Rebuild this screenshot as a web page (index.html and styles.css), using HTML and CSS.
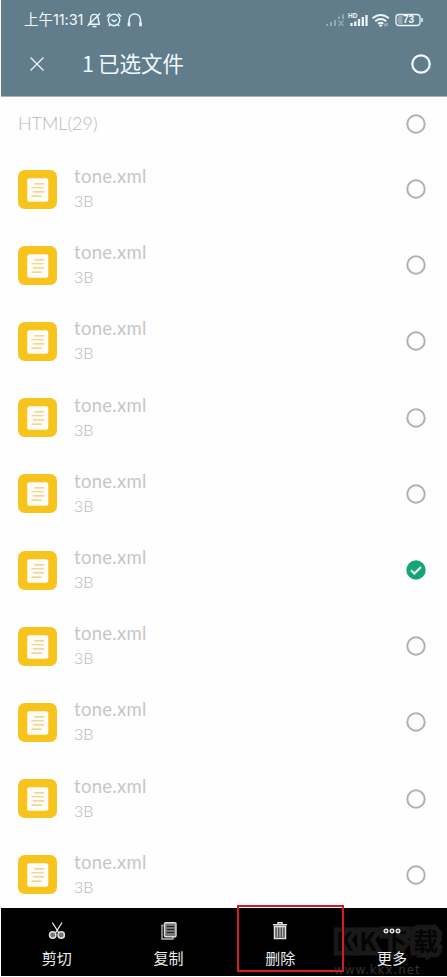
FILE: index.html
```html
<!DOCTYPE html>
<html lang="zh-CN">
<head>
<meta charset="utf-8">
<title>文件</title>
<link rel="stylesheet" href="styles.css">
</head>
<body>
<svg class="defs" aria-hidden="true">
  <symbol id="doc" viewBox="0 0 38 38">
    <rect width="38" height="38" rx="6.5" fill="#f7c31d"/>
    <rect x="9" y="8" width="20.5" height="23" rx="2" fill="#fffdf5"/>
    <path d="M16 13.500h9.500M13 17.300h12M14.500 21.300h11M13 25.500h10" stroke="#edc779" stroke-width="1.200"/>
  </symbol>
  <symbol id="ring" viewBox="0 0 20 20">
    <circle cx="10" cy="10" r="8.700" fill="none" stroke="#b0b0b0" stroke-width="2"/>
  </symbol>
  <symbol id="checked" viewBox="0 0 20 20">
    <circle cx="10" cy="10" r="9.700" fill="#16a577"/>
    <path d="M5 10.200l3.400 3.300L15 7" fill="none" stroke="#e8fff8" stroke-width="2.200"/>
  </symbol>
</svg>
<div class="phone">
  <header class="header">
    <div class="status">
      <span class="time">上午<span class="digits">11:31</span></span>
      <svg class="status-left" viewBox="0 0 58 18" fill="none" stroke="#e8f5fa" stroke-width="1.400">
        <path d="M2 13.200h12M3.700 12.500c1-1.500 1-3 1-5 0-5.500 7.500-5.500 7.500 0 0 2 .2 3.500 1.300 5M6.500 15.500h4M1.500 15L14 2.500"/>
        <circle cx="28" cy="9" r="5.700"/><path d="M25.500 8.500l2.500 2 2.700-2M20.800 5.500l3.200-3M32 2.500l3.200 3M24 13.500l-1.200 1.700M32 13.500l1.200 1.700"/>
        <path d="M43 13.500V9.500c0-8.700 11.500-8.700 11.500 0v4" stroke-width="1.600"/><path d="M43 11.500v3.700M54.500 11.500v3.700" stroke-width="2.600"/>
      </svg>
      <svg class="status-right" viewBox="0 0 100 18">
        <g stroke="#93aab5" stroke-width="2"><path d="M2 15v-2M6 15v-4M10 15V9M14 8V5.500M18 8V3.500"/><path d="M13.500 9.500l5 5.500M18.500 9.500l-5 5.500" stroke-width="1.300"/></g>
        <text x="23" y="7.300" class="hd">HD</text>
        <path d="M26.500 15v-3M30.300 15v-4.500M34 15V8M37.800 15V6M41.500 15V4" stroke="#eef8fb" stroke-width="2.300"/>
        <g fill="none" stroke="#eef8fb" stroke-width="1.900"><path d="M47.500 7.300q8.200-6.500 16.400 0M50.200 10.200q5.500-4.300 11 0M53 12.700q2.700-2 5.400 0"/></g>
        <path d="M54.200 14h3l-1.500 2zM60 12.500v3M62 12v3" fill="#eef8fb" stroke="#eef8fb" stroke-width=".7"/>
        <rect x="71" y="3.500" width="24" height="11" rx="3" fill="none" stroke="#e8f5fa" stroke-width="1.300"/>
        <path d="M74.500 5h3v8h-3q-2 0-2-2V7q0-2 2-2z" fill="#91a6af"/><path d="M97 7v4" stroke="#e8f5fa" stroke-width="1.500"/>
        <text x="78" y="12.300" class="battery">73</text>
      </svg>
    </div>
    <div class="title-bar">
      <svg class="close" viewBox="0 0 16 16"><path d="M1.500 1.500l13 13M14.500 1.500l-13 13" stroke="#f0fafd" stroke-width="1.200"/></svg>
      <h1 class="title"><span class="count">1</span>已选文件</h1>
      <svg class="select-all" viewBox="0 0 20 20"><circle cx="10" cy="10" r="8.700" fill="none" stroke="#f2fbfd" stroke-width="2.200"/></svg>
    </div>
  </header>
  <main class="list">
    <div class="group"><span class="label">HTML(29)</span><svg class="mark"><use href="#ring"/></svg></div>
    <div class="row"><svg class="file"><use href="#doc"/></svg><div class="info"><div class="name">tone.xml</div><div class="size">3B</div></div><svg class="mark"><use href="#ring"/></svg></div>
    <div class="row"><svg class="file"><use href="#doc"/></svg><div class="info"><div class="name">tone.xml</div><div class="size">3B</div></div><svg class="mark"><use href="#ring"/></svg></div>
    <div class="row"><svg class="file"><use href="#doc"/></svg><div class="info"><div class="name">tone.xml</div><div class="size">3B</div></div><svg class="mark"><use href="#ring"/></svg></div>
    <div class="row"><svg class="file"><use href="#doc"/></svg><div class="info"><div class="name">tone.xml</div><div class="size">3B</div></div><svg class="mark"><use href="#ring"/></svg></div>
    <div class="row"><svg class="file"><use href="#doc"/></svg><div class="info"><div class="name">tone.xml</div><div class="size">3B</div></div><svg class="mark"><use href="#ring"/></svg></div>
    <div class="row"><svg class="file"><use href="#doc"/></svg><div class="info"><div class="name">tone.xml</div><div class="size">3B</div></div><svg class="mark"><use href="#checked"/></svg></div>
    <div class="row"><svg class="file"><use href="#doc"/></svg><div class="info"><div class="name">tone.xml</div><div class="size">3B</div></div><svg class="mark"><use href="#ring"/></svg></div>
    <div class="row"><svg class="file"><use href="#doc"/></svg><div class="info"><div class="name">tone.xml</div><div class="size">3B</div></div><svg class="mark"><use href="#ring"/></svg></div>
    <div class="row"><svg class="file"><use href="#doc"/></svg><div class="info"><div class="name">tone.xml</div><div class="size">3B</div></div><svg class="mark"><use href="#ring"/></svg></div>
    <div class="row"><svg class="file"><use href="#doc"/></svg><div class="info"><div class="name">tone.xml</div><div class="size">3B</div></div><svg class="mark"><use href="#ring"/></svg></div>
  </main>
  <nav class="actions">
    <div class="watermark"><span class="brand">KK下载</span><span class="site">www.kkx.net</span></div>
    <div class="action">
      <svg viewBox="0 0 20 20"><path d="M5.300 1.500L12 12M15 1.500L8.500 12" stroke="#eee" stroke-width="1.300"/><g fill="#777" stroke="#ddd" stroke-width="1.500"><circle cx="5.700" cy="14" r="3.200"/><circle cx="14.200" cy="14" r="3.200"/></g></svg>
      <span>剪切</span>
    </div>
    <div class="action">
      <svg viewBox="0 0 20 20"><path d="M4.500 4.500H3V18h11v-2" fill="none" stroke="#bbb" stroke-width="1.300"/><rect x="5.500" y="1.700" width="11.500" height="14" rx="1" fill="#777" stroke="#ddd" stroke-width="1.400"/><path d="M8 5.500h7M8 8.500h7M8 11.500h7" stroke="#222" stroke-width="1.200"/></svg>
      <span>复制</span>
    </div>
    <div class="action">
      <svg viewBox="0 0 20 20" fill="none" stroke="#e2e2e2"><path d="M3 3.700h14M8 3V1.700h4V3" stroke-width="1.500"/><path d="M4.500 5.500h11V17.500h-11z" fill="#555" stroke-width="1.500"/><path d="M7.300 6v10M10 6v10M12.700 6v10" stroke="#ccc"/></svg>
      <span>删除</span>
      <i class="highlight"></i>
    </div>
    <div class="action">
      <svg viewBox="0 0 20 20" fill="#555" stroke="#eee" stroke-width="1.200"><circle cx="4" cy="10" r="1.900"/><circle cx="10" cy="10" r="1.900"/><circle cx="16" cy="10" r="1.900"/></svg>
      <span>更多</span>
    </div>
  </nav>
</div>
</body>
</html>
```
FILE: styles.css
```css
* { box-sizing: border-box; }
body { margin: 0; background: #fff; font-family: Lato, "Noto Sans CJK SC", sans-serif; }
svg { display: block; flex: none; }
.defs { position: absolute; width: 0; height: 0; }
.phone { width: 447px; height: 977px; padding-left: 1px; overflow: hidden; background: #fefefe; }
.header { height: 97px; background: #617c8a; color: #f0fafd; border-bottom: 1px solid #a2b2ba; }
.status { display: flex; align-items: center; height: 39px; padding: 0 22px 0 23px; }
.time { width: 62px; font: 14.5px/20px "Noto Sans CJK SC", sans-serif; white-space: nowrap; }
.digits { font-family: Inter, sans-serif; font-size: 14.5px; letter-spacing: -0.1px; }
.status-left { width: 58px; height: 18px; }
.status-right { width: 100px; height: 18px; margin-left: auto; }
.hd { font: bold 6.5px "Liberation Sans", sans-serif; fill: #f0fafd; }
.battery { font: bold 10px "Liberation Sans", sans-serif; fill: #f0fafd; }
.title-bar { display: flex; align-items: center; height: 50px; padding: 0 16px 0 28px; }
.close { width: 16px; height: 16px; }
.title { display: flex; align-items: center; margin: 0 0 2px 37px; font: 400 21.5px/30px "Noto Sans CJK SC", sans-serif; white-space: nowrap; }
.count { width: 16px; }
.select-all { width: 20px; height: 20px; margin-left: auto; }
.list { height: 811px; overflow: hidden; color: #c6c6c6; }
.group { display: flex; align-items: center; justify-content: space-between; height: 54px; padding: 0 21px 0 17px; font-size: 18px; font-weight: 300; }
.label { padding-bottom: 2px; color: #b9b9b9; }
.row { display: flex; align-items: center; height: 76.2px; padding: 0 21px 0 17px; }
.file { width: 39px; height: 39px; }
.info { flex: 1; padding: 0 0 2px 17px; }
.name { font-size: 18.5px; line-height: 26px; letter-spacing: 0.3px; }
.size { font-size: 16px; line-height: 24px; font-weight: 300; color: #b8b8b8; }
.mark { width: 20px; height: 20px; }
.actions { position: relative; display: grid; grid-template-columns: repeat(4, 111.7px); height: 68px; background: #000; color: #eee; }
.action { position: relative; display: flex; flex-direction: column; align-items: center; padding-top: 13px; font: 15px/22px "Noto Sans CJK SC", sans-serif; }
.action svg { width: 20px; height: 20px; }
.action span { margin-top: 6px; }
.highlight { position: absolute; left: 13px; top: -3px; width: 107px; height: 67px; border: 2px solid #d41d20; }
.watermark { position: absolute; left: 330px; top: 12px; width: 116px; height: 56px; font-family: "Noto Sans CJK SC", sans-serif; white-space: nowrap; }
.brand { position: absolute; left: 5px; top: 1px; color: #050505; font-size: 25px; line-height: 38px; font-weight: 700; letter-spacing: 6px; -webkit-text-stroke: 9px #191919; paint-order: stroke fill; }
.site { position: absolute; left: 3px; top: 42px; color: #303030; font: 12px/16px "DejaVu Sans", sans-serif; letter-spacing: 0.9px; }
```
